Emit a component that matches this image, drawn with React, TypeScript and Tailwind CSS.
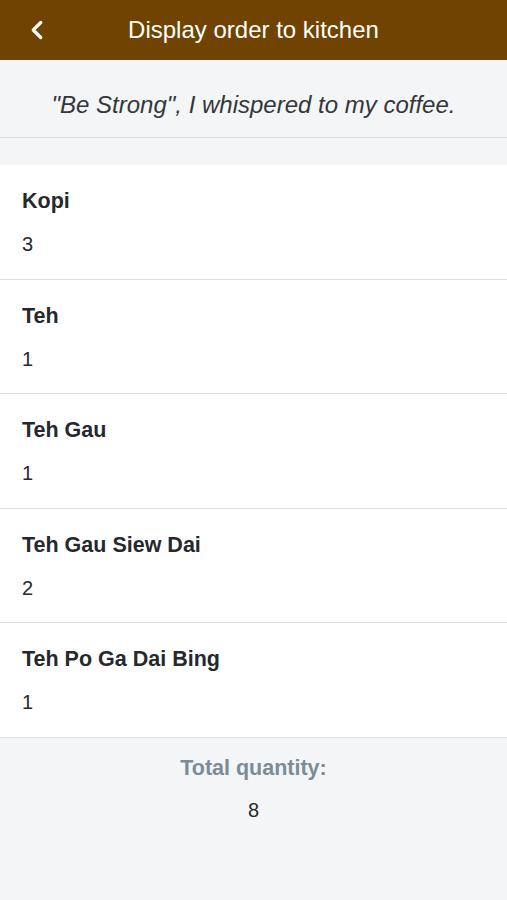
import { ChevronLeft } from "lucide-react"

export default function App() {
  const items = [
    { name: "Kopi", qty: 3 },
    { name: "Teh", qty: 1 },
    { name: "Teh Gau", qty: 1 },
    { name: "Teh Gau Siew Dai", qty: 2 },
    { name: "Teh Po Ga Dai Bing", qty: 1 },
  ]
  const total = items.reduce((s, i) => s + i.qty, 0)

  return (
    <div className="min-h-[900px] bg-[#f4f5f6] font-['Liberation_Sans',Arial,sans-serif] text-[#25292d]">
      <header className="relative flex h-[60px] items-center justify-center bg-[#704300] text-white">
        <button className="absolute left-[22px] top-[15px]">
          <ChevronLeft className="h-[30px] w-[30px]" strokeWidth={2.6} />
        </button>
        <h1 className="text-[24px] leading-none">Display order to kitchen</h1>
      </header>

      <div className="flex h-[78px] items-center justify-center border-b border-[#dcdddf] pt-[12px]">
        <p className="text-[24px] italic leading-none text-[#33373b]">"Be Strong", I whispered to my coffee.</p>
      </div>

      <div className="mt-[27px] bg-white">
        {items.map((item) => (
          <div key={item.name} className="border-b border-[#dedfe0] px-[22px] pb-[22.5px] pt-[24px]">
            <div className="text-[21.5px] font-bold leading-[24px]">{item.name}</div>
            <div className="mt-[19px] text-[20px] leading-[24px]">{item.qty}</div>
          </div>
        ))}
      </div>

      <div className="pt-[18px] text-center">
        <div className="text-[21.5px] font-bold leading-[24px] text-[#7b8c97]">Total quantity:</div>
        <div className="mt-[18px] text-[20px] leading-[24px]">{total}</div>
      </div>
    </div>
  )
}
